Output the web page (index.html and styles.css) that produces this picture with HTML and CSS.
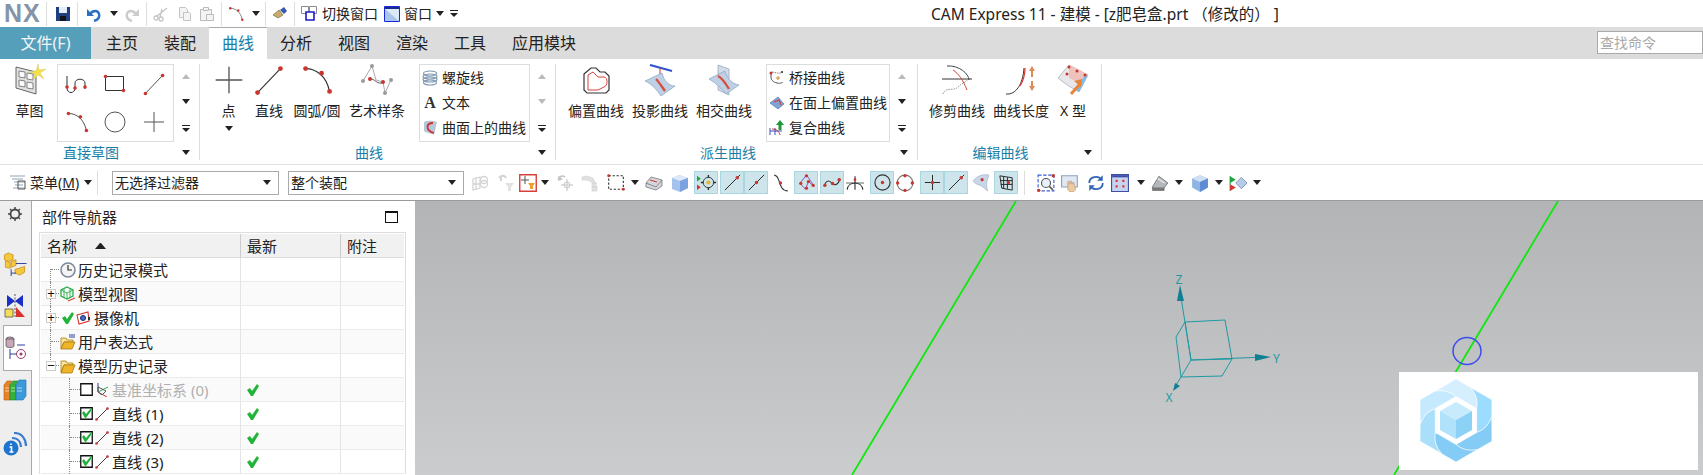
FILE: index.html
```html
<!DOCTYPE html>
<html>

<head>
  <meta charset="utf-8" />
  <title>CAM Express 11 - 建模</title>
  <link rel="stylesheet" href="styles.css">
</head>

<body>
  <!-- icon sprite -->
  <svg class="sprite" xmlns="http://www.w3.org/2000/svg">
    <defs>
      <symbol id="save" viewBox="0 0 16 16"><path d="M1 1h14v14H1z" fill="#1f3f80"/><path d="M4 1h8v6H4z" fill="#e4ecf8"/><path d="M5 10h6v5H5z" fill="#10131c"/></symbol>
      <symbol id="undo" viewBox="0 0 16 16"><path d="M4 8c3-4 8-4 9 0s-2 6-5 7" fill="none" stroke="#2a6fc4" stroke-width="2.4"/><path d="M1 3v7h7z" fill="#2a6fc4"/></symbol>
      <symbol id="redo" viewBox="0 0 16 16"><path d="M12 8c-3-4-8-4-9 0s2 6 5 7" fill="none" stroke="#ccc" stroke-width="2.4"/><path d="M15 3v7H8z" fill="#ccc"/></symbol>
      <symbol id="cut" viewBox="0 0 16 16"><g fill="none" stroke="#c4c4c4" stroke-width="1.3"><circle cx="3" cy="12" r="2"/><circle cx="8" cy="13" r="2"/><path d="M4 10 14 2M7 11 9 3"/></g></symbol>
      <symbol id="copy" viewBox="0 0 16 16"><g fill="#f4f4f4" stroke="#c4c4c4"><path d="M2.500 1.500h6l2 2v8h-8z"/><path d="M6.500 6.500h6l1 1v7h-7z"/></g></symbol>
      <symbol id="paste" viewBox="0 0 16 16"><g fill="#f4f4f4" stroke="#bbb"><path d="M1.500 3.500h11v11h-11z"/><path d="M4.500 1.500h5v3h-5z"/><path d="M7.500 8.500h7v6h-7z"/></g></symbol>
      <symbol id="arc" viewBox="0 0 28 28"><path d="M4 4c9 0 18 6 21 20" fill="none" stroke="#333"/><circle cx="4" cy="4" r="2.100" fill="#c9352f"/><circle cx="18" cy="8" r="2.100" fill="#c9352f"/><circle cx="25" cy="24" r="2.100" fill="#c9352f"/></symbol>
      <symbol id="brush" viewBox="0 0 16 16"><path d="M1 9l6-5 4 5-5 3z" fill="#c8ab6a" stroke="#6b5a35" stroke-width=".6"/><path d="M8 4l4-3 3 4-3 3z" fill="#3658b0"/></symbol>
      <symbol id="swwin" viewBox="0 0 16 16"><g fill="#fff" stroke="#8c8c8c"><path d="M.5.500h7v7h-7z"/><path d="M8.500.500h7v7h-7z"/></g><path d="M5 6h8v8H5z" fill="#fff" stroke="#1a1ad0" stroke-width="1.600"/></symbol>
      <symbol id="win" viewBox="0 0 16 16"><path d="M.5.500h15v15H.5z" fill="#dbe8f8" stroke="#1a2ad8"/><path d="M1 1h14v2H1z" fill="#1a2a90"/><path d="M1 3l14 12H1z" fill="#a9c6ea"/></symbol>

      <symbol id="sketch" viewBox="0 0 32 32"><path d="M2 3l20 5v22L2 24z" fill="#e2e2e2" stroke="#666"/><path d="M5 7l6 1v6l-6-1zM13 9l6 1v6l-6-1zM5 16l6 1v6l-6-1zM13 18l6 1v6l-6-1z" fill="#fafafa" stroke="#666" stroke-width=".8"/><path d="M24 0l1 6 7-1-6 4 4 6-6-4-5 5 2-6-6-2 7-1z" fill="#f5e04a" stroke="#d4c96a" stroke-width=".5"/></symbol>
      <symbol id="profile" viewBox="0 0 24 20"><path d="M2 2v12c0 6 8 6 8 0V9c0-5 10-5 10 0v6" fill="none" stroke="#333"/><circle cx="2" cy="13" r="1.800" fill="#c9352f"/><circle cx="10" cy="14" r="1.800" fill="#c9352f"/><circle cx="20" cy="13" r="1.800" fill="#c9352f"/></symbol>
      <symbol id="rect" viewBox="0 0 24 20"><path d="M2.500 2.500h18v14h-18z" fill="none" stroke="#333"/><circle cx="2.500" cy="2.500" r="1.800" fill="#c9352f"/><circle cx="20.500" cy="16.500" r="1.800" fill="#c9352f"/></symbol>
      <symbol id="line" viewBox="0 0 28 28"><path d="M4 25 24 4" stroke="#333"/><circle cx="4" cy="25" r="2.100" fill="#c9352f"/><circle cx="24" cy="4" r="2.100" fill="#c9352f"/></symbol>
      <symbol id="circle" viewBox="0 0 24 24"><circle cx="12" cy="12" r="10" fill="none" stroke="#555"/></symbol>
      <symbol id="plus" viewBox="0 0 24 24"><path d="M12 2v20M2 12h20" stroke="#555"/></symbol>
      <symbol id="artspl" viewBox="0 0 32 32"><path d="M2 17 11 2l4 14 7 2 2 11 6-13" fill="none" stroke="#aaa"/><path d="M9 15c5-1 7 7 14 3" fill="none" stroke="#555"/><g fill="#9a9a9a"><circle cx="2" cy="17" r="2"/><circle cx="11" cy="2" r="2"/><circle cx="24" cy="29" r="2"/><circle cx="30" cy="16" r="2"/></g><circle cx="9" cy="15" r="2" fill="#c9352f"/><circle cx="22" cy="18" r="2" fill="#c9352f"/></symbol>
      <symbol id="helix" viewBox="0 0 16 16"><g fill="none" stroke="#7f97b3" stroke-width="1.200"><ellipse cx="8" cy="3.500" rx="6.500" ry="2.500"/><ellipse cx="8" cy="6.500" rx="7" ry="2.500"/><ellipse cx="8" cy="9.500" rx="7" ry="2.500"/><ellipse cx="8" cy="12.500" rx="6.500" ry="2.500"/></g></symbol>
      <symbol id="surfc" viewBox="0 0 16 16"><path d="M2 2c5-2 10-1 13 0l-3 13c-3-2-8-2-10-4z" fill="#b8c6da"/><path d="M11 3C4 3 3 10 12 13" fill="none" stroke="#c9352f" stroke-width="1.800"/></symbol>
      <symbol id="offset" viewBox="0 0 32 32"><path d="M4 10 11 4h5l4 4h5l4 4v14l-3 3H7l-3-3z" fill="#fff" stroke="#333" stroke-width="1.200"/><path d="M8 11l5-3 5 5h6c4 0 4 9 0 10l-6 3H8z" fill="none" stroke="#d8413a"/></symbol>
      <symbol id="project" viewBox="0 0 32 32"><path d="M6 1l22 6" stroke="#2f55d0" stroke-width="2.200"/><path d="M16 4v10" stroke="#c9352f"/><path d="M13 12h6l-3 4z" fill="#c9352f"/><path d="M1 17 18 9c2 8 7 13 13 13L17 32C13 26 8 20 1 17z" fill="#bed0e6" stroke="#8aa2bf" stroke-width=".7"/><path d="M12 15c3 3 6 8 9 12" fill="none" stroke="#d8503f" stroke-width="2.400"/></symbol>
      <symbol id="intersect" viewBox="0 0 32 32"><path d="M10 1l11 4v26l-11-5z" fill="#d2dce8" stroke="#8fa2b8" stroke-width=".7"/><path d="M1 15 17 7c2 8 8 13 14 14L18 30C13 24 8 19 1 15z" fill="#bed0e6" stroke="#8aa2bf" stroke-width=".7"/><path d="M10 12c4 2 8 8 11 13" fill="none" stroke="#d8503f" stroke-width="2.400"/></symbol>
      <symbol id="bridge" viewBox="0 0 16 16"><path d="M3 2c5 1 8 2 11 0" fill="none" stroke="#777" stroke-dasharray="1.500 1"/><path d="M2 3v4c0 3 2 5 6 6s6-1 6-1" fill="none" stroke="#555"/><circle cx="2" cy="3" r="1.500" fill="#c9352f"/><circle cx="13" cy="2" r="1" fill="#333"/><path d="M9 6v4M7 8h4" stroke="#d38a24"/></symbol>
      <symbol id="faceoff" viewBox="0 0 16 16"><path d="M1 8l8-6 6 7-6 5z" fill="#7fa4d6" stroke="#4769a6" stroke-width=".6"/><path d="M5 7l5-2 2 5" fill="none" stroke="#d8413a" stroke-width="1.300"/></symbol>
      <symbol id="compos" viewBox="0 0 16 16"><path d="M1 8v7M6 8v7M1 11h12" stroke="#3a4fc0"/><path d="M3 9c4 0 7 2 8 6" fill="none" stroke="#c9352f"/><path d="M11 0l4 5h-2.500v5h-3V5H7z" fill="#1f9a3a"/></symbol>
      <symbol id="trim" viewBox="0 0 32 32"><path d="M1 15h30" stroke="#333"/><path d="M6 2c12-1 22 8 22 14" fill="none" stroke="#444"/><path d="M12 6c6 4 10 10 14 20" fill="none" stroke="#d8413a"/><path d="M2 30c3-8 10-2 15-7 4-4 9-5 9-7" fill="none" stroke="#999" stroke-dasharray="1.500 1"/></symbol>
      <symbol id="length" viewBox="0 0 32 32"><path d="M1 30c10 1 17-10 18-26" fill="none" stroke="#333"/><path d="M20 4c0 8-2 13-5 18" fill="none" stroke="#d8413a" stroke-width="1.300"/><path d="M27 2l3 5h-2v6h-2V7h-2zM27 27l3-5h-2v-5h-2v5h-2z" fill="#dd8a5a"/></symbol>
      <symbol id="xform" viewBox="0 0 32 32"><path d="M1 14 12 1l19 10-9 17c-7-4-14-8-21-14z" fill="#e8e8ec" stroke="#999" stroke-width=".6"/><path d="M12 1l9 4 10 6-9 8-10-5z" fill="#f0c2bc"/><path d="M22 28l9-17-4 2-9 12z" fill="#7dbde8"/><path d="M14 30l8-9" stroke="#e8853a" stroke-width="3"/><path d="M25 15l-1 8-7-6z" fill="#e8853a"/><g fill="#c9352f"><circle cx="12" cy="3" r="1.500"/><circle cx="20" cy="7" r="1.500"/><circle cx="28" cy="11" r="1.500"/><circle cx="10" cy="10" r="1.500"/></g></symbol>

      <symbol id="menu" viewBox="0 0 16 16"><path d="M0 1h15M2 4h11M4 7h11M5 10h8M3 13h12" stroke="#8fa3b8" stroke-width="1.200"/><path d="M8 6h7v8H8z" fill="none" stroke="#555"/></symbol>
      <symbol id="t1" viewBox="0 0 18 18"><g fill="none" stroke="#d4d4d4" stroke-width="1.300"><path d="M2 5l7-2v11l-7 2zM2 10h7M5 3v13"/><circle cx="13" cy="6" r="3.500"/><circle cx="13" cy="10" r="3.500"/></g></symbol>
      <symbol id="t2" viewBox="0 0 18 18"><path d="M2 4c2-3 6-3 7 0M4 2v5" fill="none" stroke="#d4d4d4" stroke-width="2"/><path d="M8 9h9l-3 4v4h-3v-4z" fill="#e2e2e2"/></symbol>
      <symbol id="t3" viewBox="0 0 18 18"><path d="M.75.750h16.500v16.500H.75z" fill="#fff" stroke="#d8413a" stroke-width="1.400"/><path d="M6 2v8M2 6h8" stroke="#555"/><path d="M9 9h7l-2 3v3h-3v-3z" fill="#efa02e"/></symbol>
      <symbol id="t4" viewBox="0 0 18 18"><path d="M1 6c1-4 5-5 7-3" fill="none" stroke="#c4c4c4" stroke-width="1.500"/><path d="M1 2l1 5 4-2z" fill="#c4c4c4"/><path d="M10 5v12M4 11h12" stroke="#c4c4c4"/><circle cx="10" cy="11" r="3" fill="none" stroke="#c4c4c4"/></symbol>
      <symbol id="t5" viewBox="0 0 18 18"><path d="M1 3l5-1 6 2 4 9v4h-5V8L6 6H1z" fill="#e2e2e2" stroke="#cfcfcf" stroke-width=".6"/><path d="M12 9h4M12 13h4" stroke="#cfcfcf"/></symbol>
      <symbol id="t6" viewBox="0 0 16 16"><path d="M1.500 1.500h13v12h-13z" fill="none" stroke="#333" stroke-dasharray="2 1.500"/><circle cx="1.500" cy="1.500" r="1.300" fill="#c9352f"/><circle cx="14.500" cy="13.500" r="1.300" fill="#c9352f"/></symbol>
      <symbol id="t7" viewBox="0 0 18 18"><path d="M1 9l5-6 11 3 0 6-6 4-10-3z" fill="#d4d8de" stroke="#666" stroke-width=".7"/><path d="M1 9l10 4 6-7" fill="none" stroke="#666" stroke-width=".7"/><path d="M5 6l7 2" stroke="#d8413a" stroke-width="1.200"/></symbol>
      <symbol id="t8" viewBox="0 0 18 18"><path d="M1 4l7-3 9 3v10l-8 4-8-3z" fill="#a3c2ec"/><path d="M1 4l8 3 8-3-9-3z" fill="#dde9f8"/><path d="M9 7v11l8-4V4z" fill="#7ba2e0"/></symbol>
      <symbol id="h1" viewBox="0 0 20 20"><circle cx="12" cy="10" r="5.500" fill="none" stroke="#333"/><path d="M12 2v3M12 15v3M4 10h3M17 10h3" stroke="#333" stroke-width="1.500"/><circle cx="12" cy="10" r="2.200" fill="#f0b429"/><path d="M0 3l4 3-4 3z" fill="#18a83a"/><path d="M0 12l4 3-4 3z" fill="#d8322c"/></symbol>
      <symbol id="h2" viewBox="0 0 20 20"><path d="M2 18 18 2" stroke="#222"/><circle cx="15" cy="5" r="1.800" fill="#c9352f"/></symbol>
      <symbol id="h3" viewBox="0 0 20 20"><path d="M2 18 18 2" stroke="#222"/><circle cx="10" cy="10" r="1.800" fill="#c9352f"/></symbol>
      <symbol id="h4" viewBox="0 0 16 16"><path d="M2 1c6 0 3 14 12 14" fill="none" stroke="#333"/><circle cx="7.500" cy="8" r="1.500" fill="#c9352f"/></symbol>
      <symbol id="h5" viewBox="0 0 20 20"><path d="M10 2 3 11l6 6 3-8 6 5z" fill="none" stroke="#8f4bb5"/><g fill="#c9352f"><circle cx="10" cy="3" r="1.700"/><circle cx="4" cy="11" r="1.700"/><circle cx="10" cy="16" r="1.700"/><circle cx="17" cy="13" r="1.700"/><circle cx="12" cy="9" r="1.700"/></g></symbol>
      <symbol id="h6" viewBox="0 0 20 20"><path d="M1 14c3-8 6-6 9-3s6 1 8-5" fill="none" stroke="#333" stroke-width="1.200"/><g fill="#c9352f"><circle cx="2" cy="13" r="1.800"/><circle cx="10" cy="11" r="1.800"/><circle cx="17" cy="7" r="1.800"/></g></symbol>
      <symbol id="h7" viewBox="0 0 16 16"><path d="M0 8h16" stroke="#777"/><path d="M8 2v12" stroke="#333"/><path d="M1 14c1-8 13-8 14 0" fill="none" stroke="#333"/><circle cx="8" cy="5" r="1.200" fill="#c9352f"/></symbol>
      <symbol id="h8" viewBox="0 0 20 20"><circle cx="10" cy="10" r="8" fill="none" stroke="#333" stroke-width="1.200"/><circle cx="10" cy="10" r="1.800" fill="#c9352f"/></symbol>
      <symbol id="h9" viewBox="0 0 16 16"><circle cx="8" cy="8" r="7" fill="none" stroke="#777"/><g fill="#c9352f"><circle cx="8" cy="1.500" r="1.500"/><circle cx="1.500" cy="8" r="1.500"/><circle cx="14.500" cy="8" r="1.500"/><circle cx="8" cy="14.500" r="1.500"/></g></symbol>
      <symbol id="h10" viewBox="0 0 20 20"><path d="M10 2v16M2 10h16" stroke="#222"/><circle cx="10" cy="10" r="1.800" fill="#c9352f"/></symbol>
      <symbol id="h11" viewBox="0 0 16 16"><path d="M1 6c4-5 10-6 14-5l-2 6c0 4 0 6 1 8-4-3-6-5-7-5-3-1-5-2-6-4z" fill="#c8d6e8" stroke="#9fb2c8" stroke-width=".6"/><circle cx="9" cy="5" r="1.400" fill="#c9352f"/></symbol>
      <symbol id="h12" viewBox="0 0 20 20"><path d="M3 3l13 2v13L5 16zM7 4v12M11 4.500v12M3.500 8H16M4 12h12" fill="none" stroke="#222"/><circle cx="12" cy="10" r="1.800" fill="#c9352f"/></symbol>
      <symbol id="v1" viewBox="0 0 16 16"><path d="M1 1h14v14H1z" fill="#fff" stroke="#3a5ad0" stroke-dasharray="3 1.500"/><circle cx="8" cy="8" r="4" fill="#e8f0fb" stroke="#555"/><path d="M11 11l3 3" stroke="#555" stroke-width="1.500"/><circle cx="1.500" cy="14.500" r="1.500" fill="#c9352f"/><circle cx="14.500" cy="1.500" r="1.500" fill="#c9352f"/></symbol>
      <symbol id="v2" viewBox="0 0 16 16"><path d="M.5 1.500h14v10H.5z" fill="#dfe8f3" stroke="#8fa3b8"/><path d="M6 14V7l1-1 1 3 1-3 1 3 1-2 1 3 1 4-2 2H8z" fill="#edc9a0" stroke="#b08b62" stroke-width=".5"/></symbol>
      <symbol id="v3" viewBox="0 0 16 16"><path d="M2 8c0-6 8-7 11-3M14 8c0 6-8 7-11 3" fill="none" stroke="#3566b5" stroke-width="1.600"/><path d="M14 1v5H9zM2 15v-5h5z" fill="#3566b5"/></symbol>
      <symbol id="v4" viewBox="0 0 16 16"><path d="M.5.500h15v15H.5z" fill="#c8d3f0" stroke="#3d4fa8"/><path d="M1 1h14v2H1z" fill="#3d4fa8"/><path d="M4 5h2v2H4zM10 5h2v2h-2zM4 10h2v2H4zM10 10h2v2h-2z" fill="#d8413a"/></symbol>
      <symbol id="v5" viewBox="0 0 16 16"><path d="M1 12 7 2l8 6-4 5H3z" fill="#b4b8bd" stroke="#666" stroke-width=".7"/><path d="M1 12h11v3H1z" fill="#777"/><path d="M6 4l6 4" stroke="#eee"/></symbol>
      <symbol id="v6" viewBox="0 0 16 16"><path d="M1 4l7-3 7 3v8l-7 4-7-4z" fill="#8fb4e6"/><path d="M1 4l7 3 7-3-7-3z" fill="#cfe0f6"/><path d="M8 7v9l7-4V4z" fill="#5f8ad4"/></symbol>
      <symbol id="v7" viewBox="0 0 16 16"><path d="M1 2v13" stroke="#2a6"/><path d="M1 2l5 3-5 3z" fill="#18a83a"/><path d="M1 9l5 3-5 3z" fill="#d8322c"/><path d="M6 8l5-5 5 5-5 5z" fill="#b8cce8" stroke="#6a86ad" stroke-width=".7"/></symbol>

      <symbol id="gear" viewBox="0 0 14 14"><circle cx="7" cy="7" r="4.500" fill="none" stroke="#444" stroke-width="1.800"/><path d="M7 0v3M7 11v3M0 7h3M11 7h3M2 2l2 2M10 10l2 2M12 2l-2 2M2 12l2-2" stroke="#444" stroke-width="1.400"/></symbol>
      <symbol id="s1" viewBox="0 0 24 25"><g fill="#f4c83f" stroke="#c98f10" stroke-width=".8"><path d="M5 1l5 2v5l-5 2-4-2V3z"/><path d="M2 9l5 2v6l-5-1z"/><path d="M8 10l5-2v6l-5 2z"/><path d="M16 17l6-2v6l-5 3-5-2v-4z"/></g><path d="M13 12h11M8 18v7M8 22h5" stroke="#2c3e9a"/></symbol>
      <symbol id="s2" viewBox="0 0 22 24"><path d="M3 1l8 6 8-6v12l-8-6-8 6z" fill="#1a2fc8"/><path d="M11 0v24" stroke="#555" stroke-dasharray="2 1.500"/><path d="M1 15h8v8H1z" fill="#f5dd55" stroke="#444" stroke-width=".7"/><path d="M12 13l9 10h-9z" fill="#d8322c"/></symbol>
      <symbol id="s3" viewBox="0 0 22 24"><ellipse cx="5" cy="3" rx="4" ry="2" fill="#c8a8b8" stroke="#444" stroke-width=".7"/><path d="M1 3h8v7c0 2-8 2-8 0z" fill="#c8a8b8" stroke="#444" stroke-width=".7"/><path d="M12 9h8M5 13v10M5 18h6" stroke="#2c3e9a"/><circle cx="16" cy="18" r="4.500" fill="none" stroke="#9a3a6a"/><circle cx="16" cy="18" r="1.500" fill="#9a3a6a"/></symbol>
      <symbol id="s4" viewBox="0 0 24 22"><path d="M1 6l3-4h5l-2 3v16H1z" fill="#e8812a" stroke="#b35a10" stroke-width=".6"/><path d="M7 6l3-4h5l-2 3v16H7z" fill="#36b13a" stroke="#1f7f25" stroke-width=".6"/><path d="M13 6l3-5h7v16l-3 4h-7z" fill="#3c9ad8" stroke="#1f6fae" stroke-width=".6"/><path d="M2 9h4M2 12h4M8 9h4M8 12h4M14 9h5M14 12h5" stroke="#fff" stroke-opacity=".6"/></symbol>
      <symbol id="s5" viewBox="0 0 24 24"><path d="M9 6c6 0 9 4 9 9M11 1c8 0 12 6 12 13" fill="none" stroke="#3a7cd0" stroke-width="2.200"/><circle cx="8" cy="16" r="7.500" fill="#1f74d0"/><path d="M8 11.500v1.500M6.500 15H8.500v5M6.500 20h4" fill="none" stroke="#fff" stroke-width="1.600"/></symbol>

      <symbol id="clock" viewBox="0 0 16 16"><circle cx="8" cy="8" r="7" fill="#f4f4f4" stroke="#7d8a99" stroke-width="1.600"/><path d="M8 3v5h4" fill="none" stroke="#333" stroke-width="1.200"/></symbol>
      <symbol id="mview" viewBox="0 0 16 16"><path d="M7 1l6 3v6l-6 3-6-3V4z" fill="none" stroke="#2ab04a" stroke-width="1.300"/><path d="M1 4l6 3 6-3M7 7v6M4 2.500v9M10 2.500v9" fill="none" stroke="#2ab04a" stroke-width=".9"/><path d="M8 15l7-3" stroke="#d8413a" stroke-width="1.300"/></symbol>
      <symbol id="check" viewBox="0 0 12 12"><path d="M0 6l3-2 2 3 5-7 2 2-6 10H4z" fill="#21b43a"/></symbol>
      <symbol id="cam" viewBox="0 0 14 14"><path d="M1 4l11-3 1 9-10 3z" fill="#fff" stroke="#d8322c" stroke-width="1.100"/><circle cx="7" cy="7" r="2.500" fill="#4a6fc8" stroke="#1a2a70"/><path d="M12 6h2v3h-2z" fill="#333"/></symbol>
      <symbol id="folder" viewBox="0 0 16 16"><path d="M1 3h5l1 2h6v2H4L1 14z" fill="#fbe596" stroke="#a77b10" stroke-width=".8"/><path d="M4 7h11l-3 8H1z" fill="#f0b429" stroke="#a77b10" stroke-width=".8"/></symbol>
      <symbol id="folder2" viewBox="0 0 16 16"><path d="M9 1h6M9 3h6" stroke="#2c3e9a"/><path d="M1 4h5l1 2h6v2H4L1 15z" fill="#fbe596" stroke="#a77b10" stroke-width=".8"/><path d="M4 8h11l-3 7H1z" fill="#f0b429" stroke="#a77b10" stroke-width=".8"/></symbol>
      <symbol id="chkoff" viewBox="0 0 13 13"><path d="M.75.750h11.500v11.500H.75z" fill="#fff" stroke="#111" stroke-width="1.300"/></symbol>
      <symbol id="chkon" viewBox="0 0 13 13"><path d="M.75.750h11.500v11.500H.75z" fill="#fff" stroke="#111" stroke-width="1.300"/><path d="M2 6l2-2 2 3 5-6v3l-5 7H5z" fill="#21b43a"/></symbol>
      <symbol id="csysic" viewBox="0 0 14 14"><path d="M3 0v9" stroke="#2c3e9a"/><path d="M3 9l10-5" stroke="#2ab04a"/><path d="M3 9l9 5" stroke="#d8322c"/><path d="M3 4l8 4-4 4-4-3z" fill="none" stroke="#555"/></symbol>
      <symbol id="lnic" viewBox="0 0 14 14"><path d="M1 13 13 1" stroke="#444"/><circle cx="1.500" cy="12.500" r="1.300" fill="#c9352f"/><circle cx="12.500" cy="1.500" r="1.300" fill="#c9352f"/></symbol>

      <path id="petal" d="M50.700 8.600Q59 18 56.800 29.500L36 17.500Q27.150 9.830 14.800 12.400L36 0Z"/>
    </defs>
  </svg>

  <!-- title bar -->
  <header class="titlebar">
    <span class="nx">NX</span>
    <i class="sep g6"></i>
    <svg class="ic16 g8"><use href="#save"/></svg>
    <i class="sep g6"></i>
    <svg class="ic16 g8"><use href="#undo"/></svg>
    <i class="tri g8"></i>
    <svg class="ic16 g6"><use href="#redo"/></svg>
    <i class="sep g6"></i>
    <svg class="ic16 g6"><use href="#cut"/></svg>
    <svg class="ic16 g8"><use href="#copy"/></svg>
    <svg class="ic16 g6"><use href="#paste"/></svg>
    <i class="sep g6"></i>
    <svg class="ic16 g6"><use href="#arc"/></svg>
    <i class="tri g8"></i>
    <i class="sep g5"></i>
    <svg class="ic16 g6"><use href="#brush"/></svg>
    <i class="sep g6"></i>
    <svg class="ic16 g6"><use href="#swwin"/></svg>
    <span class="g5">切换窗口</span>
    <svg class="ic16 g6"><use href="#win"/></svg>
    <span class="g4">窗口</span>
    <i class="tri g4"></i>
    <i class="more g6"></i>
    <div class="title">CAM Express 11 - 建模 - [z肥皂盒.prt （修改的） ]</div>
  </header>

  <!-- tabs -->
  <nav class="tabs">
    <a class="file" href="#">文件(F)</a>
    <a class="tab first" href="#">主页</a>
    <a class="tab" href="#">装配</a>
    <a class="tab active" href="#">曲线</a>
    <a class="tab" href="#">分析</a>
    <a class="tab" href="#">视图</a>
    <a class="tab" href="#">渲染</a>
    <a class="tab" href="#">工具</a>
    <a class="tab" href="#">应用模块</a>
    <div class="find">查找命令</div>
  </nav>

  <!-- ribbon -->
  <section class="ribbon">
    <div class="group g-sketch">
      <div class="group-body">
        <div class="big w43"><svg class="ic32"><use href="#sketch"/></svg><span>草图</span></div>
        <div class="gallery icons">
          <svg class="ic24"><use href="#profile"/></svg>
          <svg class="ic24"><use href="#rect"/></svg>
          <svg class="ic24"><use href="#line"/></svg>
          <svg class="ic24"><use href="#arc"/></svg>
          <svg class="ic24"><use href="#circle"/></svg>
          <svg class="ic24"><use href="#plus"/></svg>
        </div>
        <div class="scroller"><i class="up"></i><i class="tri"></i><i class="more"></i></div>
      </div>
      <div class="group-foot"><span>直接草图</span><i class="tri"></i></div>
    </div>

    <div class="group g-curve">
      <div class="group-body">
        <div class="big w41"><svg class="ic32"><use href="#plus"/></svg><span>点</span><i class="tri drop"></i></div>
        <div class="big w40"><svg class="ic32"><use href="#line"/></svg><span>直线</span></div>
        <div class="big w56"><svg class="ic32"><use href="#arc"/></svg><span>圆弧/圆</span></div>
        <div class="big w64"><svg class="ic32"><use href="#artspl"/></svg><span>艺术样条</span></div>
        <div class="gallery list w111">
          <div><svg class="ic16"><use href="#helix"/></svg>螺旋线</div>
          <div><b class="glyph">A</b>文本</div>
          <div><svg class="ic16"><use href="#surfc"/></svg>曲面上的曲线</div>
        </div>
        <div class="scroller"><i class="up"></i><i class="up down"></i><i class="more"></i></div>
      </div>
      <div class="group-foot"><span>曲线</span><i class="tri"></i></div>
    </div>

    <div class="group g-derived">
      <div class="group-body">
        <div class="big w64"><svg class="ic32"><use href="#offset"/></svg><span>偏置曲线</span></div>
        <div class="big w64"><svg class="ic32"><use href="#project"/></svg><span>投影曲线</span></div>
        <div class="big w64"><svg class="ic32"><use href="#intersect"/></svg><span>相交曲线</span></div>
        <div class="gallery list w124">
          <div><svg class="ic16"><use href="#bridge"/></svg>桥接曲线</div>
          <div><svg class="ic16"><use href="#faceoff"/></svg>在面上偏置曲线</div>
          <div><svg class="ic16"><use href="#compos"/></svg>复合曲线</div>
        </div>
        <div class="scroller"><i class="up"></i><i class="tri"></i><i class="more"></i></div>
      </div>
      <div class="group-foot"><span>派生曲线</span><i class="tri"></i></div>
    </div>

    <div class="group g-edit">
      <div class="group-body">
        <div class="big w64"><svg class="ic32"><use href="#trim"/></svg><span>修剪曲线</span></div>
        <div class="big w64"><svg class="ic32"><use href="#length"/></svg><span>曲线长度</span></div>
        <div class="big w40"><svg class="ic32"><use href="#xform"/></svg><span>X 型</span></div>
      </div>
      <div class="group-foot"><span>编辑曲线</span><i class="tri"></i></div>
    </div>
  </section>

  <!-- selection bar -->
  <section class="toolbar">
    <svg class="ic16"><use href="#menu"/></svg>
    <span class="g4">菜单(<u>M</u>)</span>
    <i class="tri g5"></i>
    <i class="sep g5"></i>
    <div class="select s1 g14">无选择过滤器<i class="tri"></i></div>
    <div class="select s2 g9">整个装配<i class="tri"></i></div>
    <svg class="tool g7"><use href="#t1"/></svg>
    <svg class="tool g8"><use href="#t2"/></svg>
    <svg class="tool g4"><use href="#t3"/></svg>
    <i class="tri g4"></i>
    <svg class="tool g8"><use href="#t4"/></svg>
    <svg class="tool g6"><use href="#t5"/></svg>
    <svg class="tool g8"><use href="#t6"/></svg>
    <i class="tri g6"></i>
    <svg class="tool g6"><use href="#t7"/></svg>
    <svg class="tool g8"><use href="#t8"/></svg>
    <span class="on g5"><svg><use href="#h1"/></svg></span>
    <span class="on g2"><svg><use href="#h2"/></svg></span>
    <span class="on"><svg><use href="#h3"/></svg></span>
    <svg class="tool g4"><use href="#h4"/></svg>
    <span class="on g4"><svg><use href="#h5"/></svg></span>
    <span class="on g2"><svg><use href="#h6"/></svg></span>
    <svg class="tool g2"><use href="#h7"/></svg>
    <span class="on g6"><svg><use href="#h8"/></svg></span>
    <svg class="tool g2"><use href="#h9"/></svg>
    <span class="on g6"><svg><use href="#h10"/></svg></span>
    <span class="on"><svg><use href="#h2"/></svg></span>
    <svg class="tool g4"><use href="#h11"/></svg>
    <span class="on g4"><svg><use href="#h12"/></svg></span>
    <i class="sep g6"></i>
    <svg class="tool g12"><use href="#v1"/></svg>
    <svg class="tool g6"><use href="#v2"/></svg>
    <svg class="tool g8"><use href="#v3"/></svg>
    <svg class="tool g6"><use href="#v4"/></svg>
    <i class="tri g8"></i>
    <svg class="tool g6"><use href="#v5"/></svg>
    <i class="tri g6"></i>
    <svg class="tool g8"><use href="#v6"/></svg>
    <i class="tri g6"></i>
    <svg class="tool g6"><use href="#v7"/></svg>
    <i class="tri g6"></i>
  </section>

  <main class="main">
    <!-- resource bar -->
    <aside class="strip">
      <div class="side gear"><svg class="ic14"><use href="#gear"/></svg></div>
      <div class="side tall"><svg class="ic24"><use href="#s1"/></svg></div>
      <div class="side"><svg class="ic24"><use href="#s2"/></svg></div>
      <div class="side tall active"><svg class="ic24"><use href="#s3"/></svg></div>
      <div class="side"><svg class="ic24"><use href="#s4"/></svg></div>
      <div class="side tall info"><svg class="ic24"><use href="#s5"/></svg></div>
    </aside>

    <!-- part navigator -->
    <section class="navigator">
      <div class="nav-head"><span>部件导航器</span><i class="maxi"></i></div>
      <div class="tree">
        <div class="row head">
          <div class="c1">名称<i class="sort"></i></div>
          <div class="c2">最新</div>
          <div class="c3">附注</div>
        </div>
        <div class="row">
          <div class="c1 lv1 top"><i class="box none"></i><svg class="ic16 g4"><use href="#clock"/></svg><span class="g2">历史记录模式</span></div>
          <div class="c2"></div><div class="c3"></div>
        </div>
        <div class="row alt">
          <div class="c1 lv1"><i class="box">+</i><svg class="ic16 g4"><use href="#mview"/></svg><span class="g2">模型视图</span></div>
          <div class="c2"></div><div class="c3"></div>
        </div>
        <div class="row">
          <div class="c1 lv1"><i class="box">+</i><svg class="ic12 g6"><use href="#check"/></svg><svg class="ic14 g2"><use href="#cam"/></svg><span class="g4">摄像机</span></div>
          <div class="c2"></div><div class="c3"></div>
        </div>
        <div class="row alt">
          <div class="c1 lv1"><i class="box none"></i><svg class="ic16 g4"><use href="#folder2"/></svg><span class="g2">用户表达式</span></div>
          <div class="c2"></div><div class="c3"></div>
        </div>
        <div class="row">
          <div class="c1 lv1 end"><i class="box">−</i><svg class="ic16 g4"><use href="#folder"/></svg><span class="g2">模型历史记录</span></div>
          <div class="c2"></div><div class="c3"></div>
        </div>
        <div class="row alt">
          <div class="c1 lv2"><svg class="ic13"><use href="#chkoff"/></svg><svg class="ic14 g2"><use href="#csysic"/></svg><span class="g3 off">基准坐标系 (0)</span></div>
          <div class="c2"><svg class="ic12"><use href="#check"/></svg></div><div class="c3"></div>
        </div>
        <div class="row">
          <div class="c1 lv2"><svg class="ic13"><use href="#chkon"/></svg><svg class="ic14 g2"><use href="#lnic"/></svg><span class="g3">直线 (1)</span></div>
          <div class="c2"><svg class="ic12"><use href="#check"/></svg></div><div class="c3"></div>
        </div>
        <div class="row alt">
          <div class="c1 lv2"><svg class="ic13"><use href="#chkon"/></svg><svg class="ic14 g2"><use href="#lnic"/></svg><span class="g3">直线 (2)</span></div>
          <div class="c2"><svg class="ic12"><use href="#check"/></svg></div><div class="c3"></div>
        </div>
        <div class="row">
          <div class="c1 lv2"><svg class="ic13"><use href="#chkon"/></svg><svg class="ic14 g2"><use href="#lnic"/></svg><span class="g3">直线 (3)</span></div>
          <div class="c2"><svg class="ic12"><use href="#check"/></svg></div><div class="c3"></div>
        </div>
      </div>
    </section>

    <!-- graphics window -->
    <section class="viewport">
      <svg class="scene" viewBox="0 0 1288 274">
        <path d="M601 0 437 274M1143 0 979 274" stroke="#0ee80e" stroke-width="1.800"/>
        <ellipse cx="1052" cy="150" rx="14" ry="13.500" fill="none" stroke="#3a4df0" stroke-width="1.500"/>
        <g fill="none" stroke="#1f9aa3">
          <path d="M770 121 810 119 817 158 776 159ZM770 121 761 136 766 176 807 175 817 158M766 176 776 159"/>
          <path d="M776 159 765 90M776 159 850 156M766 176 761 184"/>
        </g>
        <g fill="#0f7f94">
          <path d="M765 84 762 100 769 100Z"/>
          <path d="M856 156 840 153 840 160Z"/>
          <path d="M758 190 760 182 765 185Z"/>
        </g>
        <g class="axis">
          <text x="764" y="83" text-anchor="middle">Z</text>
          <text x="858" y="162">Y</text>
          <text x="754" y="201" text-anchor="middle">X</text>
        </g>
      </svg>
      <div class="stamp">
        <svg class="logo" viewBox="0 0 72 83">
          <g stroke="#fff" stroke-width=".5">
            <use href="#petal" fill="#d6effe"/>
            <use href="#petal" fill="#9cdcff" transform="rotate(60 36 41.500)"/>
            <use href="#petal" fill="#84ccf5" transform="rotate(120 36 41.500)"/>
            <use href="#petal" fill="#84ccf5" transform="rotate(180 36 41.500)"/>
            <use href="#petal" fill="#a9dffb" transform="rotate(240 36 41.500)"/>
            <use href="#petal" fill="#c5e9fe" transform="rotate(300 36 41.500)"/>
          </g>
          <path d="M36 23 52 32 36 41 20 32Z" fill="#c8eafd"/>
          <path d="M20 32 36 41V60L20 51Z" fill="#b0e2fb"/>
          <path d="M52 32 36 41V60L52 51Z" fill="#8cd2f7"/>
        </svg>
      </div>
    </section>
  </main>
</body>

</html>
```

FILE: styles.css
```css
* {
  margin: 0;
  padding: 0;
  box-sizing: border-box;
}

html, body {
  width: 1703px;
  height: 475px;
  overflow: hidden;
}

body {
  background: #fff;
  font: 14px/16px 'Noto Sans', 'Noto Sans CJK SC', sans-serif;
  color: #222;
}

a {
  color: inherit;
  text-decoration: none;
}

i {
  font-style: normal;
  display: block;
  flex: none;
}

svg {
  display: block;
  flex: none;
}

.sprite {
  position: absolute;
  width: 0;
  height: 0;
}

.ic12 { width: 12px; height: 12px; }
.ic13 { width: 13px; height: 13px; }
.ic14 { width: 14px; height: 14px; }
.ic16 { width: 16px; height: 16px; }
.ic24 { width: 24px; height: 24px; }
.ic32 { width: 32px; height: 32px; }

.g2 { margin-left: 2px; }
.g3 { margin-left: 3px; }
.g4 { margin-left: 4px; }
.g5 { margin-left: 5px; }
.g6 { margin-left: 6px; }
.g7 { margin-left: 7px; }
.g8 { margin-left: 8px; }
.g9 { margin-left: 9px; }
.g12 { margin-left: 12px; }
.g14 { margin-left: 14px; }

.tri {
  width: 8px;
  height: 0;
  border-left: 4px solid transparent;
  border-right: 4px solid transparent;
  border-top: 5px solid #222;
}

.more {
  width: 8px;
  height: 7px;
  border-top: 1px solid #222;
}
.more:after {
  content: '';
  display: block;
  margin-top: 2px;
  border-left: 4px solid transparent;
  border-right: 4px solid transparent;
  border-top: 4px solid #222;
}

.sep {
  width: 1px;
  height: 24px;
  background: #ddd;
}

/* title bar */
.titlebar {
  display: flex;
  align-items: center;
  height: 27px;
  padding-left: 4px;
}
.nx {
  width: 36px;
  font: bold 25px/25px 'Liberation Sans', sans-serif;
  letter-spacing: 1px;
  color: #8594a6;
}
.title {
  margin-left: 473px;
  font-size: 15.500px;
  white-space: nowrap;
}

/* tabs */
.tabs {
  display: flex;
  height: 32px;
  background: #dcdcdc;
  font-size: 16px;
  line-height: 32px;
}
.tabs .file {
  width: 91px;
  background: #559fbb;
  color: #f2f5f7;
  text-align: center;
}
.tabs .tab {
  padding: 0 13px;
}
.tabs .first {
  margin-left: 2px;
}
.tabs .active {
  background: #fff;
  color: #1a7ea6;
  border-top: 1px solid #aaa;
  line-height: 30px;
}
.find {
  width: 106px;
  height: 23px;
  margin: 4px 0 0 auto;
  padding-left: 2px;
  background: #fff;
  border: 1px solid #aaa;
  font-size: 14px;
  line-height: 21px;
  color: #aaa;
}

/* ribbon */
.ribbon {
  display: flex;
  height: 106px;
  padding-top: 5px;
  border-bottom: 1px solid #e0e0e0;
}
.group {
  display: flex;
  flex-direction: column;
  height: 96px;
  border-right: 1px solid #ddd;
}
.g-sketch { width: 200px; padding-left: 8px; }
.g-curve { width: 356px; padding-left: 8px; }
.g-derived { width: 362px; padding-left: 8px; }
.g-edit { width: 184px; padding-left: 7px; }

.group-body {
  display: flex;
  height: 81px;
}
.group-foot {
  display: flex;
  align-items: center;
  height: 15px;
  margin-left: -8px;
  padding-right: 9px;
  font-size: 14px;
  color: #1a7ea6;
}
.group-foot span {
  flex: 1;
  text-align: center;
}

.big {
  display: flex;
  flex-direction: column;
  align-items: center;
  white-space: nowrap;
}
.big span {
  margin-top: 7px;
}
.big .drop {
  margin-top: 7px;
}
.w40 { width: 40px; }
.w41 { width: 41px; }
.w43 { width: 43px; }
.w56 { width: 56px; }
.w64 { width: 64px; }
.w111 { width: 111px; }
.w124 { width: 124px; }

.gallery {
  height: 78px;
  margin-left: 6px;
  border: 1px solid #ddd;
}
.gallery.icons {
  display: grid;
  grid-template-columns: repeat(3, 1fr);
  grid-template-rows: repeat(2, 1fr);
  place-items: center;
  width: 117px;
}
.gallery.list {
  display: flex;
  flex-direction: column;
  margin-left: 10px;
  padding-left: 2px;
  white-space: nowrap;
}
.gallery.list div {
  display: flex;
  align-items: center;
  gap: 4px;
  flex: 1;
}
.glyph {
  width: 16px;
  font: bold 16px/16px 'Liberation Serif', serif;
  color: #333;
  text-align: center;
}
.scroller {
  display: flex;
  flex-direction: column;
  align-items: center;
  justify-content: space-around;
  width: 9px;
  height: 78px;
  margin-left: 7px;
}
.up {
  width: 8px;
  height: 0;
  border-left: 4px solid transparent;
  border-right: 4px solid transparent;
  border-bottom: 5px solid #bbb;
}
.up.down {
  border-bottom: 0;
  border-top: 5px solid #bbb;
}

/* selection bar */
.toolbar {
  display: flex;
  align-items: center;
  height: 36px;
  padding-left: 10px;
  border-bottom: 1px solid #9a9a9a;
}
.select {
  display: flex;
  align-items: center;
  justify-content: space-between;
  height: 24px;
  padding: 0 7px 0 2px;
  border: 1px solid #aaa;
}
.select.s1 { width: 167px; }
.select.s2 { width: 176px; }
.tool {
  width: 18px;
  height: 18px;
}
.on {
  display: flex;
  align-items: center;
  justify-content: center;
  flex: none;
  width: 24px;
  height: 23px;
  background: #cde5ea;
  border: 1px solid #a9d6e0;
}
.on svg {
  width: 19px;
  height: 19px;
}

/* below the bars */
.main {
  display: flex;
  height: 274px;
}
.strip {
  flex: none;
  width: 32px;
  background: #eeeeee;
  border-right: 1px solid #aaa;
}
.side {
  display: flex;
  align-items: center;
  justify-content: center;
  height: 38px;
  padding-right: 2px;
}
.side.gear {
  align-items: flex-start;
  height: 40px;
  padding-top: 6px;
}
.side.tall {
  height: 46px;
}
.side.info {
  margin-top: 12px;
}
.side.active {
  position: relative;
  z-index: 1;
  width: 29px;
  margin: 0 -1px 0 3px;
  padding-right: 4px;
  background: #fff;
  border: 1px solid #aaa;
  border-right: 0;
}

.navigator {
  flex: none;
  width: 383px;
  padding: 0 9px 0 7px;
  background: #fff;
}
.nav-head {
  display: flex;
  align-items: center;
  justify-content: space-between;
  height: 31px;
  padding: 0 8px 0 3px;
  font-size: 15px;
}
.maxi {
  width: 13px;
  height: 12px;
  border: 1px solid #111;
  border-top-width: 2px;
}
.tree {
  border: 1px solid #ddd;
  border-bottom: 0;
  padding: 1px 1px 0;
  font-size: 15px;
}
.row {
  display: flex;
  height: 24px;
  border-bottom: 1px solid #eaeaea;
}
.row.alt {
  background: #fafafa;
}
.row.head {
  background: #f1f1f1;
  border-bottom: 1px solid #ddd;
}
.c1, .c2, .c3 {
  display: flex;
  align-items: center;
  white-space: nowrap;
}
.c1 {
  position: relative;
  width: 200px;
  border-right: 1px solid #e4e4e4;
}
.c2 {
  width: 100px;
  padding-left: 6px;
  border-right: 1px solid #e4e4e4;
}
.c3 {
  padding-left: 6px;
}
.head .c1 {
  padding-left: 6px;
}
.head .c1, .head .c2 {
  border-right-color: #ccc;
}
.sort {
  width: 11px;
  height: 0;
  margin-left: 18px;
  border-left: 5.500px solid transparent;
  border-right: 5.500px solid transparent;
  border-bottom: 6px solid #222;
}
.lv1 {
  padding-left: 5px;
}
.lv2 {
  padding-left: 39px;
}
.lv1:before, .lv2:before {
  content: '';
  position: absolute;
  top: 0;
  bottom: -1px;
  left: 9px;
  border-left: 1px dotted #888;
}
.lv2:before {
  left: 28px;
}
.lv1.top:before {
  top: 11px;
}
.lv1.end:before {
  bottom: 11px;
}
.lv1:after, .lv2:after {
  content: '';
  position: absolute;
  top: 11px;
  left: 10px;
  width: 8px;
  border-top: 1px dotted #888;
}
.lv2:after {
  left: 29px;
  width: 10px;
}
.box {
  position: relative;
  z-index: 1;
  width: 10px;
  height: 10px;
  background: #fff;
  border: 1px solid #ccc;
  font: 13px/8px 'Liberation Sans', sans-serif;
  text-align: center;
  color: #111;
}
.box.none {
  background: none;
  border: 0;
}
.off {
  color: #b0b0b0;
}

.viewport {
  position: relative;
  flex: 1;
  background: linear-gradient(#b3b4b6, #cbcccd);
}
.scene {
  position: absolute;
  left: 0;
  top: 0;
  width: 1288px;
  height: 274px;
}
.axis {
  font: 12px 'Noto Sans', sans-serif;
  fill: #1f9aa3;
}
.stamp {
  position: absolute;
  left: 984px;
  top: 171px;
  width: 299px;
  height: 98px;
  padding: 7px 0 0 21px;
  background: #fff;
}
.logo {
  width: 72px;
  height: 83px;
}
```
